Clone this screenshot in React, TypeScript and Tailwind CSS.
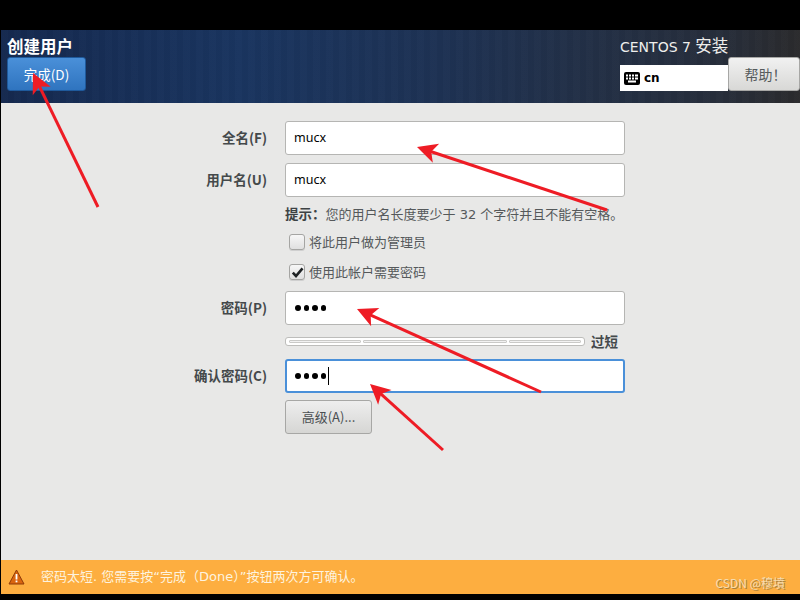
import React from "react";

const font = { fontFamily: '"DejaVu Sans", "Noto Sans CJK SC", sans-serif' };
const cjk = { fontFamily: '"Noto Sans CJK SC", sans-serif' };
const noto = { fontFamily: '"Noto Sans", "Noto Sans CJK SC", sans-serif' };

function Arrow({ x1, y1, x2, y2 }: { x1: number; y1: number; x2: number; y2: number }) {
  const dx = x2 - x1;
  const dy = y2 - y1;
  const len = Math.hypot(dx, dy);
  const ux = dx / len;
  const uy = dy / len;
  const bx = x2 - ux * 20;
  const by = y2 - uy * 20;
  const p = `${x2},${y2} ${bx - uy * 10},${by + ux * 10} ${x2 - ux * 15},${y2 - uy * 15} ${bx + uy * 10},${by - ux * 10}`;
  return (
    <g>
      <line x1={x1} y1={y1} x2={x2 - ux * 12} y2={y2 - uy * 12} stroke="#ee1c25" strokeWidth="3" />
      <polygon points={p} fill="#ee1c25" />
    </g>
  );
}

function Row({ label, children, className }: { label: string; children: React.ReactNode; className?: string }) {
  return (
    <div className={"flex items-center " + (className ?? "")}>
      <div className="w-[266px] shrink-0 pb-[2px] text-right text-[13.5px] font-bold text-[#44494b]" style={cjk}>{label}</div>
      <div className="ml-[18px]">{children}</div>
    </div>
  );
}

function Field({ children, focused }: { children: React.ReactNode; focused?: boolean }) {
  return (
    <div
      className={
        "flex h-[34px] w-[340px] items-center rounded-[3px] bg-white text-[12.5px] text-black " +
        (focused ? "border-2 border-[#4a90d9] pl-[7px]" : "border border-[#b5b5b3] pl-[8px]")
      }
      style={noto}
    >
      {children}
    </div>
  );
}

function Dots() {
  return (
    <div className="ml-px flex gap-[3px]">
      <span className="size-[5.5px] rounded-full bg-black" />
      <span className="size-[5.5px] rounded-full bg-black" />
      <span className="size-[5.5px] rounded-full bg-black" />
      <span className="size-[5.5px] rounded-full bg-black" />
    </div>
  );
}

function Check({ label, checked, className }: { label: string; checked?: boolean; className?: string }) {
  return (
    <div className={"ml-[288px] flex h-[20px] items-center gap-[4px] text-[13px] text-[#55595b] " + (className ?? "")} style={cjk}>
      <div className="flex size-[16px] items-center justify-center rounded-[3px] border border-[#a5a5a3] bg-gradient-to-b from-[#f7f7f7] to-[#e0e0e0] shadow-[0_1px_0_#cfcfcf]">
        {checked && (
          <svg width="13" height="13" viewBox="0 0 13 13">
            <path d="M1.8 6.6 L5 10 L11.5 2.4" fill="none" stroke="#1e2224" strokeWidth="2.6" />
          </svg>
        )}
      </div>
      <span>{label}</span>
    </div>
  );
}

function Seg({ w }: { w: string }) {
  return <div className={"h-[3px] rounded-[1px] border border-[#c9c9c7] bg-[#f2f2f2] " + w} />;
}

export default function App() {
  return (
    <div className="relative flex h-[600px] w-[800px] flex-col overflow-hidden bg-black pt-[30px] pb-[6px] pl-px" style={font}>
      <header className="flex h-[73px] shrink-0 justify-between bg-[repeating-linear-gradient(90deg,rgba(255,255,255,0.006)_0px,rgba(255,255,255,0.006)_7px,rgba(0,0,0,0.025)_7px,rgba(0,0,0,0.025)_13px),linear-gradient(90deg,#15294f_0%,#1a3560_30%,#1e3254_55%,#272e3b_90%,#2b2b2d_100%)] pl-[6px]">
        <div className="pt-[7px]">
          <div className="h-[20px] text-[16.5px] leading-[18px] font-bold text-white" style={cjk}>创建用户</div>
          <div className="flex h-[34px] w-[79px] items-center justify-center rounded-[3px] border border-[#1f5a9c] bg-gradient-to-b from-[#4a90d9] to-[#2f74bf] text-[13.5px] text-white" style={cjk}>
            完成(D)
          </div>
        </div>
        <div className="w-[180px] pt-[7px]">
          <div className="h-[20px] text-[14px] leading-[20px] text-[#eeeeec]">
            CENTOS 7 <span className="text-[16.5px]">安装</span>
          </div>
          <div className="flex">
            <div className="mt-[8px] flex h-[26px] w-[108px] items-center gap-[4px] bg-white pl-[4px] text-[12px] font-bold text-black">
              <svg width="16" height="13" viewBox="0 0 16 13">
                <rect width="16" height="13" rx="2" fill="#000" />
                <g fill="#fff">
                  <rect x="2" y="2.5" width="2" height="2" />
                  <rect x="5" y="2.5" width="2" height="2" />
                  <rect x="8" y="2.5" width="2" height="2" />
                  <rect x="11" y="2.5" width="3" height="2" />
                  <rect x="2" y="5.5" width="2" height="2" />
                  <rect x="5" y="5.5" width="2" height="2" />
                  <rect x="8" y="5.5" width="2" height="2" />
                  <rect x="11" y="5.5" width="3" height="2" />
                  <rect x="4" y="8.5" width="8" height="2" />
                </g>
              </svg>
              cn
            </div>
            <div className="flex h-[34px] w-[72px] items-center justify-center rounded-[3px] border border-[#a7a7a5] bg-gradient-to-b from-[#f1f1f1] to-[#d8d8d6] pl-[3px] text-[14px] text-[#555a5c]" style={cjk}>
              帮助！
            </div>
          </div>
        </div>
      </header>

      <main className="flex min-h-0 flex-1 flex-col bg-[#e8e8e7] pt-[18px]">
        <Row label="全名(F)"><Field>mucx</Field></Row>
        <Row label="用户名(U)" className="mt-[8px]"><Field>mucx</Field></Row>
        <div className="mt-[8px] ml-[284px] h-[18px] text-[13px] leading-[18px] whitespace-nowrap text-[#55595b]" style={font}>
          <b className="text-[13.5px] text-[#3d4244]">提示：</b>您的用户名长度要少于 32 个字符并且不能有空格。
        </div>
        <Check label="将此用户做为管理员" className="mt-[9px]" />
        <Check label="使用此帐户需要密码" checked className="mt-[10px]" />
        <Row label="密码(P)" className="mt-[9px]"><Field><Dots /></Field></Row>
        <div className="mt-[12px] ml-[284px] flex h-[9px] items-center">
          <div className="flex h-[9px] w-[300px] items-center gap-[2px] rounded-[3px] border border-[#bdbdbb] bg-white px-[3px]">
            <Seg w="w-[72px]" />
            <Seg w="w-[144px]" />
            <Seg w="w-[72px]" />
          </div>
          <span className="ml-[6px] text-[13.5px] font-bold text-[#44494b]" style={cjk}>过短</span>
        </div>
        <Row label="确认密码(C)" className="mt-[13px]">
          <Field focused>
            <Dots />
            <span className="ml-[2px] h-[18px] w-px bg-black" />
          </Field>
        </Row>
        <div className="mt-[7px] ml-[284px] flex h-[34px] w-[87px] items-center justify-center rounded-[3px] border border-[#a7a7a5] bg-gradient-to-b from-[#eeeeee] to-[#d6d6d4] text-[13px] text-[#4a4f51]" style={cjk}>
          高级(A)...
        </div>
      </main>

      <footer className="relative flex h-[34px] shrink-0 items-center bg-[#fdae40] pl-[7px] text-[13px] text-[#fdf3df]" style={font}>
        <svg width="17" height="16" viewBox="0 0 17 16">
          <path d="M8.5 1 L16 15 H1 Z" fill="#d9650f" stroke="#8f3a08" strokeWidth="1" strokeLinejoin="round" />
          <rect x="7.6" y="5" width="1.8" height="5.5" fill="#fff" />
          <rect x="7.6" y="11.5" width="1.8" height="1.8" fill="#fff" />
        </svg>
        <span className="ml-[16px]">密码太短. 您需要按“完成（Done）”按钮两次方可确认。</span>
        <span className="absolute right-[15px] bottom-[2px] text-[12px] text-[#f6dcae] [text-shadow:1px_1px_0_#a8803e]" style={cjk}>CSDN @穆墳</span>
      </footer>

      <svg className="pointer-events-none absolute inset-0" width="800" height="600">
        <Arrow x1={98} y1={207} x2={33} y2={73} />
        <Arrow x1={607} y1={210} x2={417} y2={147} />
        <Arrow x1={541} y1={392} x2={357} y2={309} />
        <Arrow x1={443} y1={450} x2={370} y2={384} />
      </svg>
    </div>
  );
}
